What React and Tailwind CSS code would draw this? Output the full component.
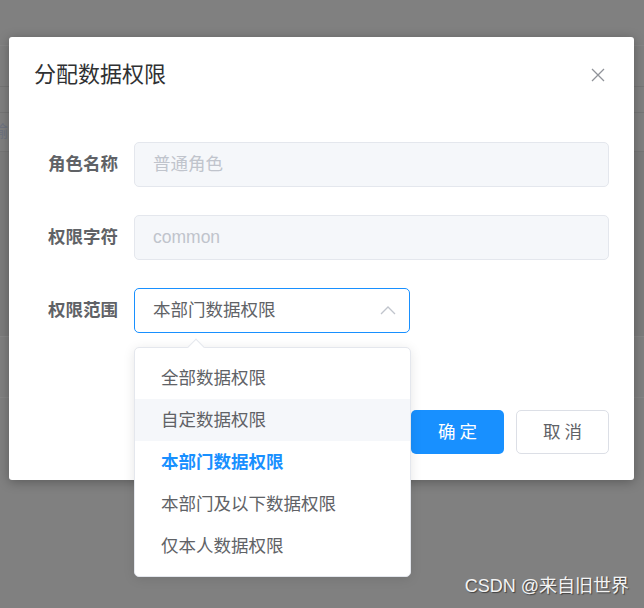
// Role data-scope dialog with the scope select opened.
const font = { fontFamily: '"Liberation Sans", "Noto Sans CJK SC", sans-serif' }

const scopes = ['全部数据权限', '自定数据权限', '本部门数据权限', '本部门及以下数据权限', '仅本人数据权限']

function Field({ label, children }) {
  return (
    <div className="flex items-center">
      <label className="w-[100px] shrink-0 pr-4 text-right text-[17.5px] font-bold text-[#606266]">{label}</label>
      {children}
    </div>
  )
}

function DisabledInput({ value }) {
  return (
    <div className="flex h-[45px] w-[475px] items-center rounded-[5px] border border-[#e4e7ed] bg-[#f5f7fa] pl-[18px] text-[17.5px] text-[#c0c4cc]">
      {value}
    </div>
  )
}

export default function App() {
  return (
    <div className="relative h-[608px] w-[644px] overflow-hidden bg-[#808080]" style={font}>
      {/* page behind the mask */}
      <div className="flex flex-col">
        <div className="h-[46px] border-b border-[#868686]" />
        <div className="h-[41px] border-b border-[#767676]" />
        <div className="h-[26px] border-b border-[#767676]" />
        <div className="flex h-[39px] items-center justify-between border-b border-[#767676]">
          <span className="-ml-[8px] text-[16px] text-[#6f7480]">输</span>
          <span className="-mr-[8px] text-[16px] font-bold text-[#4a3a28]">t</span>
        </div>
        <div className="h-[185px] border-b border-[#868686] bg-[#7c7c7c]" />
        <div className="h-[61px] border-b border-[#868686]" />
      </div>

      {/* dialog */}
      <div className="absolute left-[9px] top-[37px] flex h-[443px] w-[625px] flex-col rounded-[3px] bg-white shadow-[0_2px_12px_rgba(0,0,0,0.3)]">
        <div className="flex items-center justify-between pl-[25px] pr-[29px] pt-[23px]">
          <span className="text-[22px] leading-[30px] text-[#303133]">分配数据权限</span>
          <svg width="14" height="14" viewBox="0 0 14 14" className="text-[#909399]">
            <path d="M1 1 13 13M13 1 1 13" stroke="currentColor" strokeWidth="1.3" fill="none" />
          </svg>
        </div>

        <div className="flex flex-col gap-[28px] px-[25px] pt-[52px]">
          <Field label="角色名称">
            <DisabledInput value="普通角色" />
          </Field>
          <Field label="权限字符">
            <DisabledInput value="common" />
          </Field>
          <Field label="权限范围">
            <div className="flex h-[45px] w-[276px] items-center justify-between rounded-[5px] border border-[#1890ff] pl-[18px] pr-[13px] text-[17.5px] text-[#606266]">
              <span>本部门数据权限</span>
              <svg width="16" height="9" viewBox="0 0 16 9" className="text-[#c0c4cc]">
                <polyline points="1,8 8,1 15,8" stroke="currentColor" strokeWidth="1.3" fill="none" />
              </svg>
            </div>
          </Field>
        </div>

        <div className="mt-auto flex justify-end gap-[12px] px-[25px] pb-[26px]">
          <button className="h-[44px] w-[93px] rounded-[5px] bg-[#1890ff] pl-[4px] text-[17.5px] tracking-[4px] text-white">确定</button>
          <button className="h-[44px] w-[93px] rounded-[5px] border border-[#dcdfe6] bg-white pl-[4px] text-[17.5px] tracking-[4px] text-[#606266]">取消</button>
        </div>
      </div>

      {/* select dropdown */}
      <div className="absolute left-[134px] top-[347px] w-[277px] rounded-[5px] border border-[#e4e7ed] bg-white py-[9px] shadow-[0_2px_12px_rgba(0,0,0,0.1)]">
        <div className="absolute -top-[7px] left-[55px] h-[12px] w-[12px] rotate-45 border-l border-t border-[#e4e7ed] bg-white" />
        {scopes.map((s, i) => (
          <div
            key={s}
            className={
              'flex h-[42px] items-center pl-[26px] text-[17.5px] ' +
              (i === 1 ? 'bg-[#f5f7fa] ' : '') +
              (i === 2 ? 'font-bold text-[#1890ff]' : 'text-[#606266]')
            }
          >
            {s}
          </div>
        ))}
      </div>

      <div className="absolute bottom-[8px] right-[15px] text-[18px] text-[#f4f4f4] [text-shadow:1px_1px_1px_rgba(0,0,0,0.5)]">
        CSDN @来自旧世界
      </div>
    </div>
  )
}
